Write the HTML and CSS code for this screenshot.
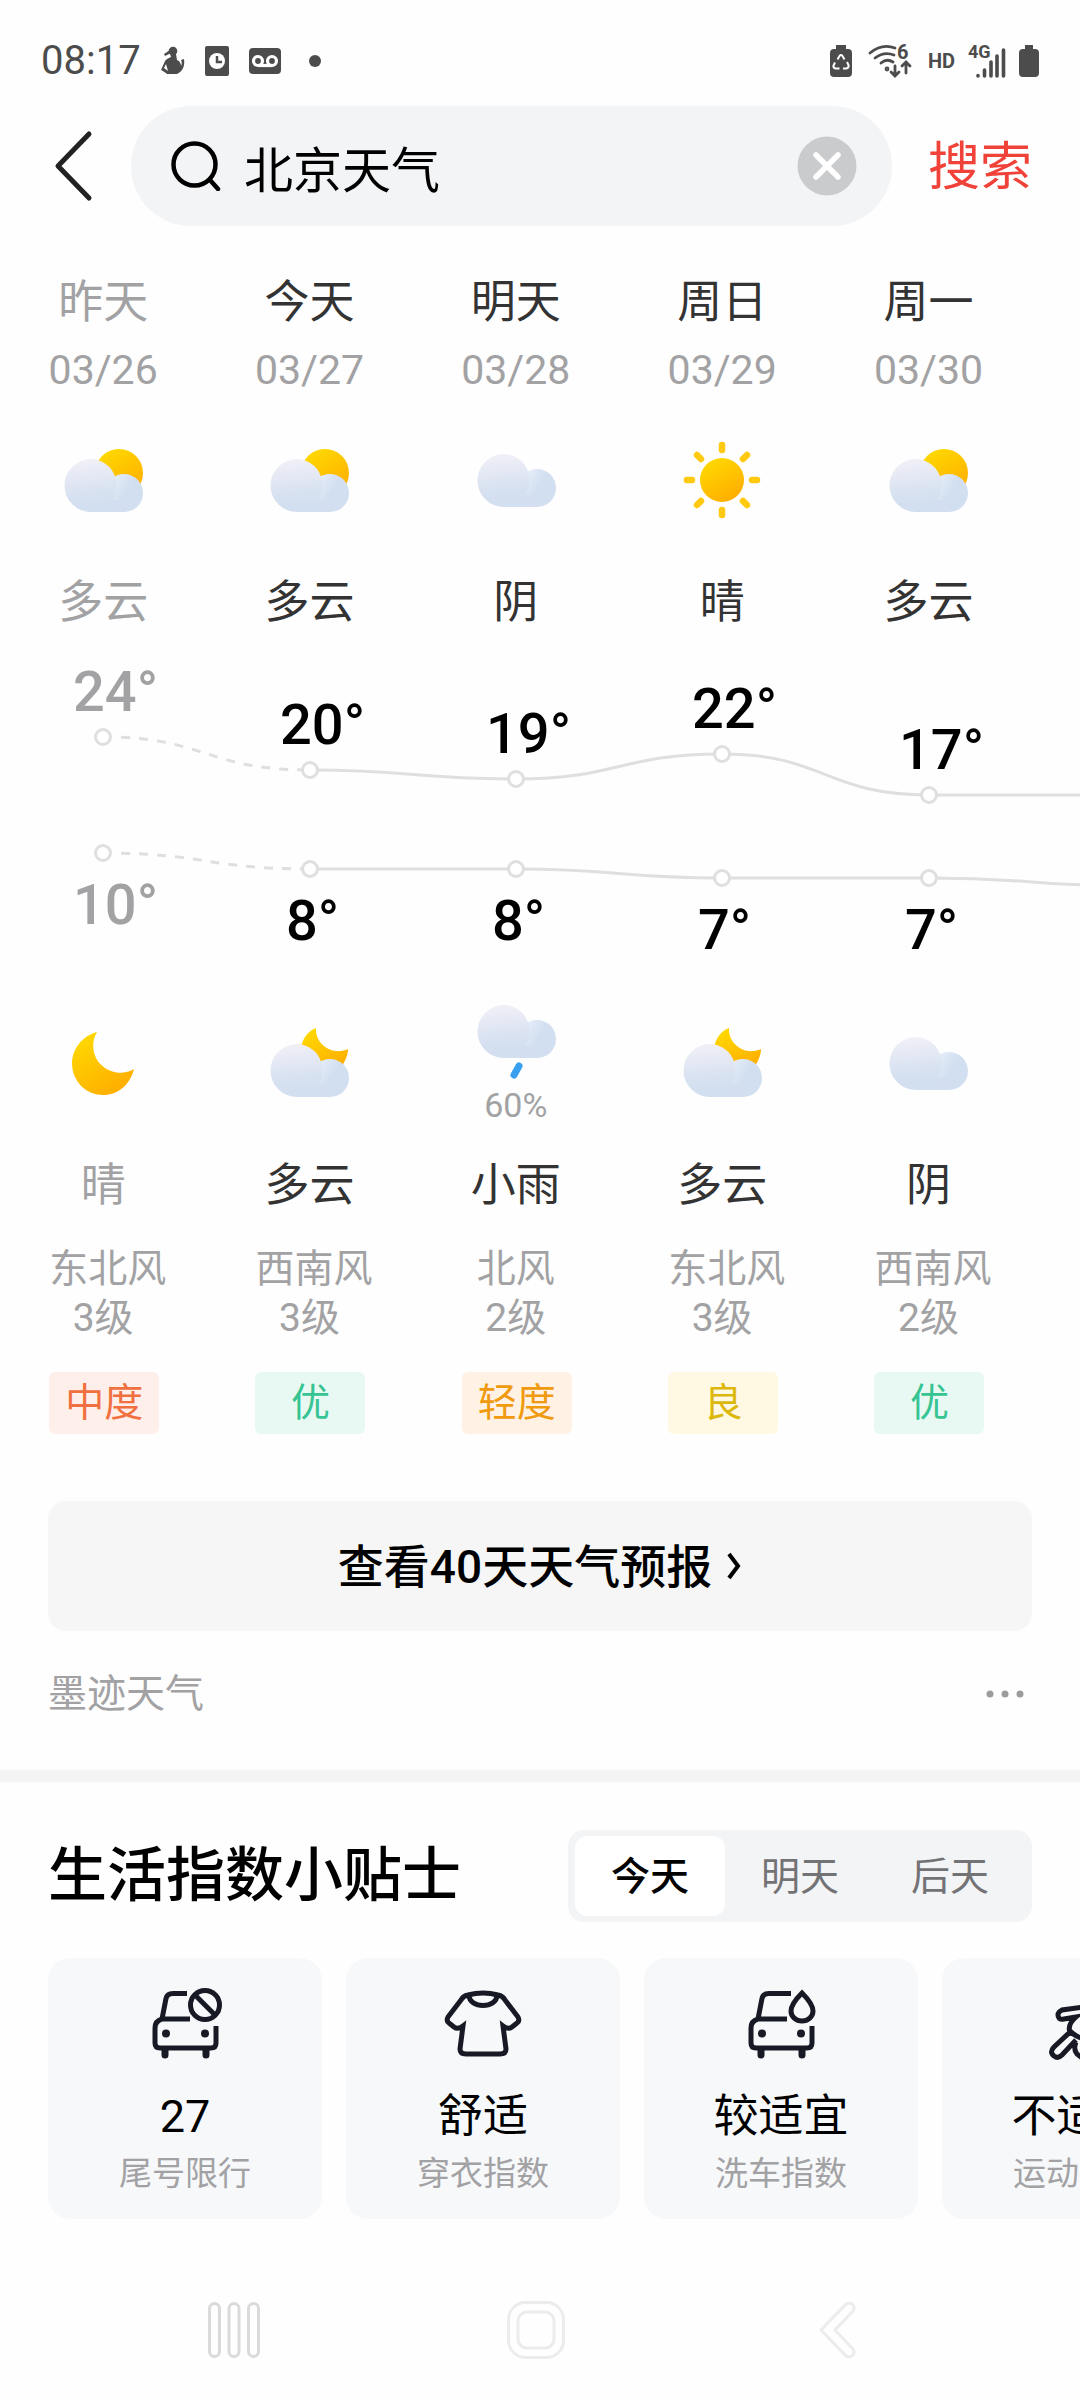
FILE: index.html
```html
<!DOCTYPE html>
<html lang="zh-CN">
<head>
<meta charset="utf-8">
<meta name="viewport" content="width=device-width, initial-scale=1">
<title>北京天气</title>
<link rel="stylesheet" href="styles.css">
</head>
<body>
<svg class="defs" aria-hidden="true">
  <defs>
    <linearGradient id="sunFill" x1="0.2" y1="0" x2="0.8" y2="1">
      <stop offset="0" stop-color="#ffda00"/><stop offset="1" stop-color="#ffab00"/>
    </linearGradient>
    <linearGradient id="cloudBig" x1="0.4" y1="0" x2="0.5" y2="1">
      <stop offset="0" stop-color="#f1f0f7"/><stop offset="0.7" stop-color="#d5e0f0"/><stop offset="1" stop-color="#d2dff0"/>
    </linearGradient>
    <linearGradient id="cloudSmall" x1="0" y1="0.3" x2="0.7" y2="0.7">
      <stop offset="0" stop-color="#e9f0fa"/><stop offset="0.7" stop-color="#d2dff0"/>
    </linearGradient>
    <g id="cloud">
      <circle cx="61" cy="53" r="19" fill="url(#cloudSmall)"/>
      <path d="M28 19a26 26 0 0 1 22 39v14H28a26 26 0 0 1 0-53Z" fill="url(#cloudBig)"/>
      <path d="M48 60h14v12H48Z" fill="#d3dff0"/>
    </g>
    <symbol id="partly" viewBox="0 0 80 80">
      <circle cx="56" cy="33" r="24" fill="url(#sunFill)"/>
      <use href="#cloud"/>
    </symbol>
    <symbol id="overcast" viewBox="0 0 80 80"><use href="#cloud" transform="translate(0 -5)"/></symbol>
    <symbol id="sunny" viewBox="0 0 80 80">
      <circle cx="40" cy="40" r="22" fill="url(#sunFill)"/>
      <path d="M40 5v5M40 70v5M5 40h5M70 40h5M15 15l4 4M61 61l4 4M65 15l-4 4M19 61l-4 4" stroke="#ffc90f" stroke-width="6.5" stroke-linecap="round"/>
    </symbol>
    <symbol id="moon" viewBox="0 0 80 80">
      <path d="M34 9C19 13 9 26 9 41a31 31 0 0 0 31 31c15 0 27-10 31-26A27 27 0 0 1 34 9Z" fill="url(#sunFill)"/>
    </symbol>
    <symbol id="moonCloud" viewBox="0 0 80 80">
      <path d="M47 5C39 8 34 15 32 24l26 24 14-4c4-5 7-12 7-18C64 33 46 22 47 5Z" fill="url(#sunFill)"/>
      <use href="#cloud" transform="translate(0 2)"/>
    </symbol>
    <symbol id="rain" viewBox="0 0 80 84">
      <use href="#cloud" transform="translate(0 -14)"/>
      <path d="M43 66l-5 9" stroke="#38a0ee" stroke-width="7" stroke-linecap="round"/>
    </symbol>
  </defs>
</svg>

<header class="status">
  <div class="status-left">
    <span class="clock">08:17</span>
    <svg width="24" height="30" viewBox="0 0 24 30" fill="#4c4c4c"><circle cx="12" cy="5" r="4.300"/><path d="M9 4 3 8l1 2 6-3ZM9 8h6l1 6c3 1 4 4 4 6 1-2 1-4 0-6l3-1c1 7-1 12-7 15H6c-2-2-4-3-6-4l4-9c1-2 4-3 6-4ZM5 18l-2 4 4 3Z" fill-rule="evenodd"/></svg>
    <svg width="24" height="32" viewBox="0 0 24 32"><rect y="1" width="24" height="30" rx="2" fill="#4c4c4c"/><circle cx="12" cy="16" r="8" fill="#fff"/><path d="M12 11v6h5" fill="none" stroke="#4c4c4c" stroke-width="2.500"/></svg>
    <svg width="32" height="28" viewBox="0 0 32 28"><rect y="1" width="32" height="26" rx="4" fill="#4c4c4c"/><g fill="none" stroke="#fff" stroke-width="3.200"><circle cx="9" cy="14" r="4.500"/><circle cx="23" cy="14" r="4.500"/><path d="M9 18.500h14"/></g></svg>
    <span class="more-dot"></span>
  </div>
  <div class="status-right">
    <svg width="22" height="32" viewBox="0 0 22 32"><path d="M6 0h10v4h2a4 4 0 0 1 4 4v20a4 4 0 0 1-4 4H4a4 4 0 0 1-4-4V8a4 4 0 0 1 4-4h2Z" fill="#4c4c4c"/><path d="m7.500 14.500 2-3.500q1.500-2 3 0l2 3.500M17 17l1.500 3q.5 3-2 3.500H13M9.500 23.500h-4q-2.500-.5-2-3l1.500-3" fill="none" stroke="#fff" stroke-width="2"/></svg>
    <svg class="wifi" width="44" height="34" viewBox="0 0 44 34" fill="none" stroke="#4c4c4c" stroke-width="2.800" stroke-linecap="round"><path d="M2 9Q14-1 27 4M7 14q9-7 19-3M13 19q6-5 12-1"/><circle cx="19" cy="25" r="1" /><path d="M27 22v9m-4-3 4 4 4-4M38 29V19m-4 3 4-4 4 4"/><text x="29" y="15" class="wifi-gen">6</text></svg>
    <span class="hd">HD</span>
    <svg class="signal" width="38" height="34" viewBox="0 0 38 34"><text x="0" y="14" class="net">4G</text><path d="M10 32v-.5M16.500 32v-6M23 32V18M29 32V12M35.500 32V6" stroke="#4c4c4c" stroke-width="3.600" stroke-linecap="round"/></svg>
    <svg width="20" height="32" viewBox="0 0 20 32"><path d="M6 0h8v4h2a4 4 0 0 1 4 4v20a4 4 0 0 1-4 4H4a4 4 0 0 1-4-4V8a4 4 0 0 1 4-4h2Z" fill="#4c4c4c"/></svg>
  </div>
</header>

<form class="search">
  <button class="back" type="button" aria-label="返回"><svg width="52" height="72" viewBox="0 0 52 72"><path d="M41 4 10 36l31 32" fill="none" stroke="#222" stroke-width="5" stroke-linecap="round" stroke-linejoin="round"/></svg></button>
  <div class="search-box">
    <svg width="50" height="50" viewBox="0 0 50 50" fill="none" stroke="#000" stroke-width="4.500" stroke-linecap="round"><circle cx="23.500" cy="23.500" r="21"/><path d="m39 39 8 9"/></svg>
    <input class="search-input" type="text" value="北京天气" aria-label="搜索内容">
    <button class="clear" type="button" aria-label="清除"><svg width="60" height="60" viewBox="0 0 60 60"><circle cx="30" cy="30" r="29.500" fill="#cacbcd"/><path d="M19 19l22 22M41 19 19 41" stroke="#fff" stroke-width="5.500" stroke-linecap="round"/></svg></button>
  </div>
  <button class="submit" type="submit">搜索</button>
</form>

<main>
  <section class="forecast" aria-label="天气预报">
    <div class="strip">
      <div class="days">
        <div class="cell past"><div class="name">昨天</div><div class="date">03/26</div><svg class="wx"><use href="#partly"/></svg><div class="name cond">多云</div></div>
        <div class="cell"><div class="name">今天</div><div class="date">03/27</div><svg class="wx"><use href="#partly"/></svg><div class="name cond">多云</div></div>
        <div class="cell"><div class="name">明天</div><div class="date">03/28</div><svg class="wx"><use href="#overcast"/></svg><div class="name cond">阴</div></div>
        <div class="cell"><div class="name">周日</div><div class="date">03/29</div><svg class="wx"><use href="#sunny"/></svg><div class="name cond">晴</div></div>
        <div class="cell"><div class="name">周一</div><div class="date">03/30</div><svg class="wx"><use href="#partly"/></svg><div class="name cond">多云</div></div>
      </div>

      <svg class="chart" viewBox="0 3 1238 368">
        <g class="lines">
          <path class="dashed" d="M103 107C206 107 206 140 310 140"/>
          <path d="M310 140C413 140 413 149 516 149S619 124 722 124 825 165 929 165H1135"/>
          <path class="dashed" d="M103 223C206 223 206 239 310 239"/>
          <path d="M310 239H516C619 239 619 248 722 248H929C1032 248 1032 256 1135 256"/>
        </g>
        <g class="halo"><circle cx="103" cy="107" r="18"/><circle cx="103" cy="223" r="18"/></g>
        <g class="dots">
          <circle cx="103" cy="107" r="7.500"/><circle cx="310" cy="140" r="7.500"/><circle cx="516" cy="149" r="7.500"/><circle cx="722" cy="124" r="7.500"/><circle cx="929" cy="165" r="7.500"/>
          <circle cx="103" cy="223" r="7.500"/><circle cx="310" cy="239" r="7.500"/><circle cx="516" cy="239" r="7.500"/><circle cx="722" cy="248" r="7.500"/><circle cx="929" cy="248" r="7.500"/>
        </g>
        <g class="temps">
          <text class="old" x="73" y="81">24°</text><text x="280" y="114">20°</text><text x="486" y="123">19°</text><text x="692" y="98">22°</text><text x="899" y="139">17°</text>
          <text class="old" x="73" y="294">10°</text><text x="286" y="310">8°</text><text x="492" y="310">8°</text><text x="698" y="319">7°</text><text x="905" y="319">7°</text>
        </g>
      </svg>

      <div class="days">
        <div class="cell past"><div class="night"><svg class="wx"><use href="#moon"/></svg></div><div class="name night-cond">晴</div><div class="wind">东北风<br><span>3级</span></div><span class="badge moderate">中度</span></div>
        <div class="cell"><div class="night"><svg class="wx"><use href="#moonCloud"/></svg></div><div class="name night-cond">多云</div><div class="wind">西南风<br><span>3级</span></div><span class="badge good">优</span></div>
        <div class="cell"><div class="night"><svg class="wx tall"><use href="#rain"/></svg><span class="chance">60%</span></div><div class="name night-cond">小雨</div><div class="wind">北风<br><span>2级</span></div><span class="badge light">轻度</span></div>
        <div class="cell"><div class="night"><svg class="wx"><use href="#moonCloud"/></svg></div><div class="name night-cond">多云</div><div class="wind">东北风<br><span>3级</span></div><span class="badge fair">良</span></div>
        <div class="cell"><div class="night"><svg class="wx"><use href="#overcast"/></svg></div><div class="name night-cond">阴</div><div class="wind">西南风<br><span>2级</span></div><span class="badge good">优</span></div>
      </div>
    </div>

    <button class="more" type="button"><span>查看40天天气预报</span><svg width="16" height="30" viewBox="0 0 16 30"><path d="m3 3 9 12-9 12" fill="none" stroke="#000" stroke-width="4"/></svg></button>
    <div class="source"><span>墨迹天气</span><button class="dots-button" type="button" aria-label="更多"><svg width="40" height="10" viewBox="0 0 40 10" fill="#9c9c9e"><circle cx="5" cy="5" r="3.500"/><circle cx="20" cy="5" r="3.500"/><circle cx="35" cy="5" r="3.500"/></svg></button></div>
  </section>

  <section class="tips">
    <div class="tips-head">
      <h2>生活指数小贴士</h2>
      <div class="tabs"><button class="tab on" type="button">今天</button><button class="tab" type="button">明天</button><button class="tab" type="button">后天</button></div>
    </div>
    <div class="cards">
      <article class="card">
        <svg class="ico" viewBox="0 0 80 80"><path d="M42 9.500H28q-6 0-7 5L17 35H45M17 35q-7 2-7 9V59q0 5 5 5H66q5 0 5-5V42"/><path class="wheel" d="M20 66v5M61 66v5"/><circle cx="60" cy="21" r="14.500"/><path d="m50 11 20 20"/><g class="lamp"><circle cx="21" cy="49.500" r="4"/><circle cx="60" cy="49.500" r="4"/></g></svg>
        <div class="value">27</div><div class="label">尾号限行</div>
      </article>
      <article class="card">
        <svg class="ico" viewBox="0 0 80 80"><path d="M25 11q15-4 30 0 5 1 7 5L75 33q2 4-1 6l-5 4q-4 3-9-1l3 23q0 5-6 5H23q-6 0-6-5l3-23q-5 4-9 1l-5-4q-3-2-1-6L18 16q2-4 7-5Z"/><path d="M26 11c0 14 28 14 28 0"/></svg>
        <div class="value">舒适</div><div class="label">穿衣指数</div>
      </article>
      <article class="card">
        <svg class="ico" viewBox="0 0 80 80"><path d="M50 9.500H28q-6 0-7 5L17 35H46M17 35q-7 2-7 9V59q0 5 5 5H66q5 0 5-5V42"/><path class="wheel" d="M20 66v5M61 66v5"/><path d="M61 9c-7 7-11 13-11 18a11 10 0 0 0 22 0c0-5-4-11-11-18Z"/><g class="lamp"><circle cx="21" cy="49.500" r="4"/><circle cx="60" cy="49.500" r="4"/></g></svg>
        <div class="value">较适宜</div><div class="label">洗车指数</div>
      </article>
      <article class="card">
        <svg class="ico" viewBox="0 0 80 80"><path d="M58 26 44 23 23 26q-6 3-3 8 1 2 5 1l12-2q-9 8-6 15L15 63q-5 5 0 9 4 3 8-1L37 56M30 46q6 7 16 9M37 58q-3 7 1 12l8 6"/><circle cx="62" cy="15" r="7"/></svg>
        <div class="value">不适宜</div><div class="label">运动指数</div>
      </article>
    </div>
  </section>
</main>

<nav class="sysnav">
  <button type="button" aria-label="最近任务"><svg width="60" height="60" viewBox="0 0 60 60" fill="none" stroke="#dadada" stroke-width="3"><rect x="5.500" y="3.500" width="10" height="53" rx="5"/><rect x="25" y="3.500" width="10" height="53" rx="5"/><rect x="44.500" y="3.500" width="10" height="53" rx="5"/></svg></button>
  <button type="button" aria-label="主屏幕"><svg width="60" height="60" viewBox="0 0 60 60" fill="none" stroke="#ececec" stroke-width="3"><rect x="2.500" y="2.500" width="55" height="55" rx="17"/><rect x="12" y="12" width="36" height="36" rx="9"/></svg></button>
  <button type="button" aria-label="返回"><svg width="60" height="60" viewBox="0 0 60 60" fill="none" stroke="#ececec" stroke-width="3" stroke-linejoin="round"><path d="m13 30 25-26q4-2 7 1 2 3 0 6L27 30l18 19q2 3 0 6-3 3-7 1Z"/></svg></button>
</nav>
</body>
</html>
```
FILE: styles.css
```css
* { box-sizing: border-box; }
body {
  margin: 0;
  background: #fefefe;
  color: #000;
  font-family: Roboto, "Noto Sans CJK SC", sans-serif;
  overflow-x: hidden;
}
svg { display: block; flex: none; }
button { margin: 0; padding: 0; border: 0; background: none; color: inherit; font: inherit; }
.defs { position: absolute; width: 0; height: 0; }

/* status bar */
.status {
  display: flex;
  justify-content: space-between;
  align-items: center;
  height: 106px;
  padding: 16px 41px 0 41px;
  color: #4c4c4c;
}
.status-left { display: flex; align-items: center; }
.status-left svg { margin-right: 20px; }
.clock { margin-right: 20px; font-size: 40px; line-height: 48px; }
.more-dot { width: 12px; height: 12px; margin-left: 8px; border-radius: 50%; background: #4c4c4c; }
.status-right { display: flex; align-items: center; gap: 13px; }
.hd { font-size: 20px; font-weight: 700; line-height: 24px; }
.wifi { margin: 0 3px; overflow: visible; }
.signal { overflow: visible; }
.net { font-size: 18px; font-weight: 700; fill: #4c4c4c; }
.wifi-gen { font-size: 20px; font-weight: 700; fill: #4c4c4c; stroke: none; }

/* search */
.search { display: flex; align-items: center; padding: 0 48px; }
.back { width: 52px; }
.search-box {
  flex: 1;
  display: flex;
  align-items: center;
  min-width: 0;
  height: 120px;
  margin: 0 36px 0 31px;
  padding: 0 35px 0 40px;
  border-radius: 60px;
  background: #f3f4f6;
}
.search-input {
  flex: 1;
  min-width: 0;
  height: 80px;
  margin-left: 23px;
  padding: 0;
  border: 0;
  outline: 0;
  background: none;
  color: #000;
  font: inherit;
  font-size: 49px;
}
.submit { padding-top: 4px; color: #f04239; font-size: 52px; line-height: 72px; }

/* forecast strip */
.forecast { padding-top: 47px; overflow: hidden; border-bottom: 12px solid #f4f4f5; }
.strip { width: 1238px; }
.days { display: grid; grid-template-columns: repeat(6, 1fr); justify-items: center; }
.cell { display: flex; flex-direction: column; align-items: center; width: 108px; }
.name { font-size: 45px; line-height: 60px; color: #333; white-space: nowrap; }
.past .name { color: #a2a2a4; }
.date { margin-top: 12px; font-size: 41px; line-height: 50px; color: #a2a2a4; }
.wx { width: 80px; height: 80px; }
.date + .wx { margin-top: 45px; }
.cond { margin-top: 53px; }
.chart { width: 100%; overflow: visible; }
.lines path { fill: none; stroke: #dfdfe1; stroke-width: 3; }
.lines .dashed { stroke-dasharray: 9 9; }
.halo circle { fill: #fefefe; }
.dots circle { fill: #fff; stroke: #dfdfe1; stroke-width: 3; }
.temps text { font-size: 56px; font-weight: 500; }
.temps .old { fill: #a2a2a4; }
.night { display: flex; flex-direction: column; align-items: center; justify-content: center; height: 124px; }
.tall { height: 84px; }
.chance { font-size: 34px; line-height: 42px; color: #a2a2a4; }
.night-cond { margin-top: 31px; }
.wind { align-self: stretch; margin-top: 29px; font-size: 39px; line-height: 49px; color: #a2a2a4; text-align: center; white-space: nowrap; }
.badge { width: 110px; margin-top: 29px; border-radius: 6px; font-size: 39px; line-height: 62px; text-align: center; align-self: flex-start; }
.moderate { background: #ffefeb; color: #f0703f; }
.good { background: #e8f9f4; color: #36c492; }
.light { background: #fff2e5; color: #f09a10; }
.fair { background: #fff9e3; color: #dcb80c; }

.more {
  display: flex;
  align-items: center;
  justify-content: center;
  gap: 14px;
  width: calc(100% - 96px);
  height: 130px;
  margin: 67px 48px 33px;
  border-radius: 18px;
  background: #f6f6f6;
  font-size: 46px;
  font-weight: 500;
}
.more span { padding-bottom: 6px; }
.source {
  display: flex;
  align-items: center;
  justify-content: space-between;
  padding: 0 55px 46px 48px;
  color: #a2a2a4;
  font-size: 39px;
  line-height: 60px;
}

/* life index */
.tips { padding-top: 48px; overflow: hidden; }
.tips-head { display: flex; align-items: center; justify-content: space-between; padding: 0 48px; }
h2 { margin: 0; font-size: 59px; font-weight: 500; line-height: 80px; }
.tabs { display: flex; padding: 6px 7px; border-radius: 16px; background: #f3f4f6; }
.tab { width: 150px; height: 80px; padding-bottom: 7px; border-radius: 12px; color: #737375; font-size: 39px; }
.tab.on { background: #fff; color: #000; font-weight: 500; }
.cards { display: grid; grid-auto-flow: column; grid-auto-columns: 274px; gap: 24px; padding: 36px 0 0 48px; }
.card {
  display: flex;
  flex-direction: column;
  align-items: center;
  padding: 26px 0 23px;
  border-radius: 22px;
  background: #f7f8fa;
}
.ico { width: 80px; height: 80px; fill: none; stroke: #171a24; stroke-width: 5; }
.wheel { stroke-width: 7; stroke-linecap: round; }
.lamp { fill: #171a24; stroke: none; }
.value { margin-top: 23px; font-size: 45px; line-height: 60px; white-space: nowrap; }
.label { margin-top: 5px; font-size: 33px; line-height: 44px; color: #a2a2a4; white-space: nowrap; }

/* system navigation */
.sysnav { display: flex; justify-content: center; gap: 242px; padding: 81px 8px 39px 0; }
```
